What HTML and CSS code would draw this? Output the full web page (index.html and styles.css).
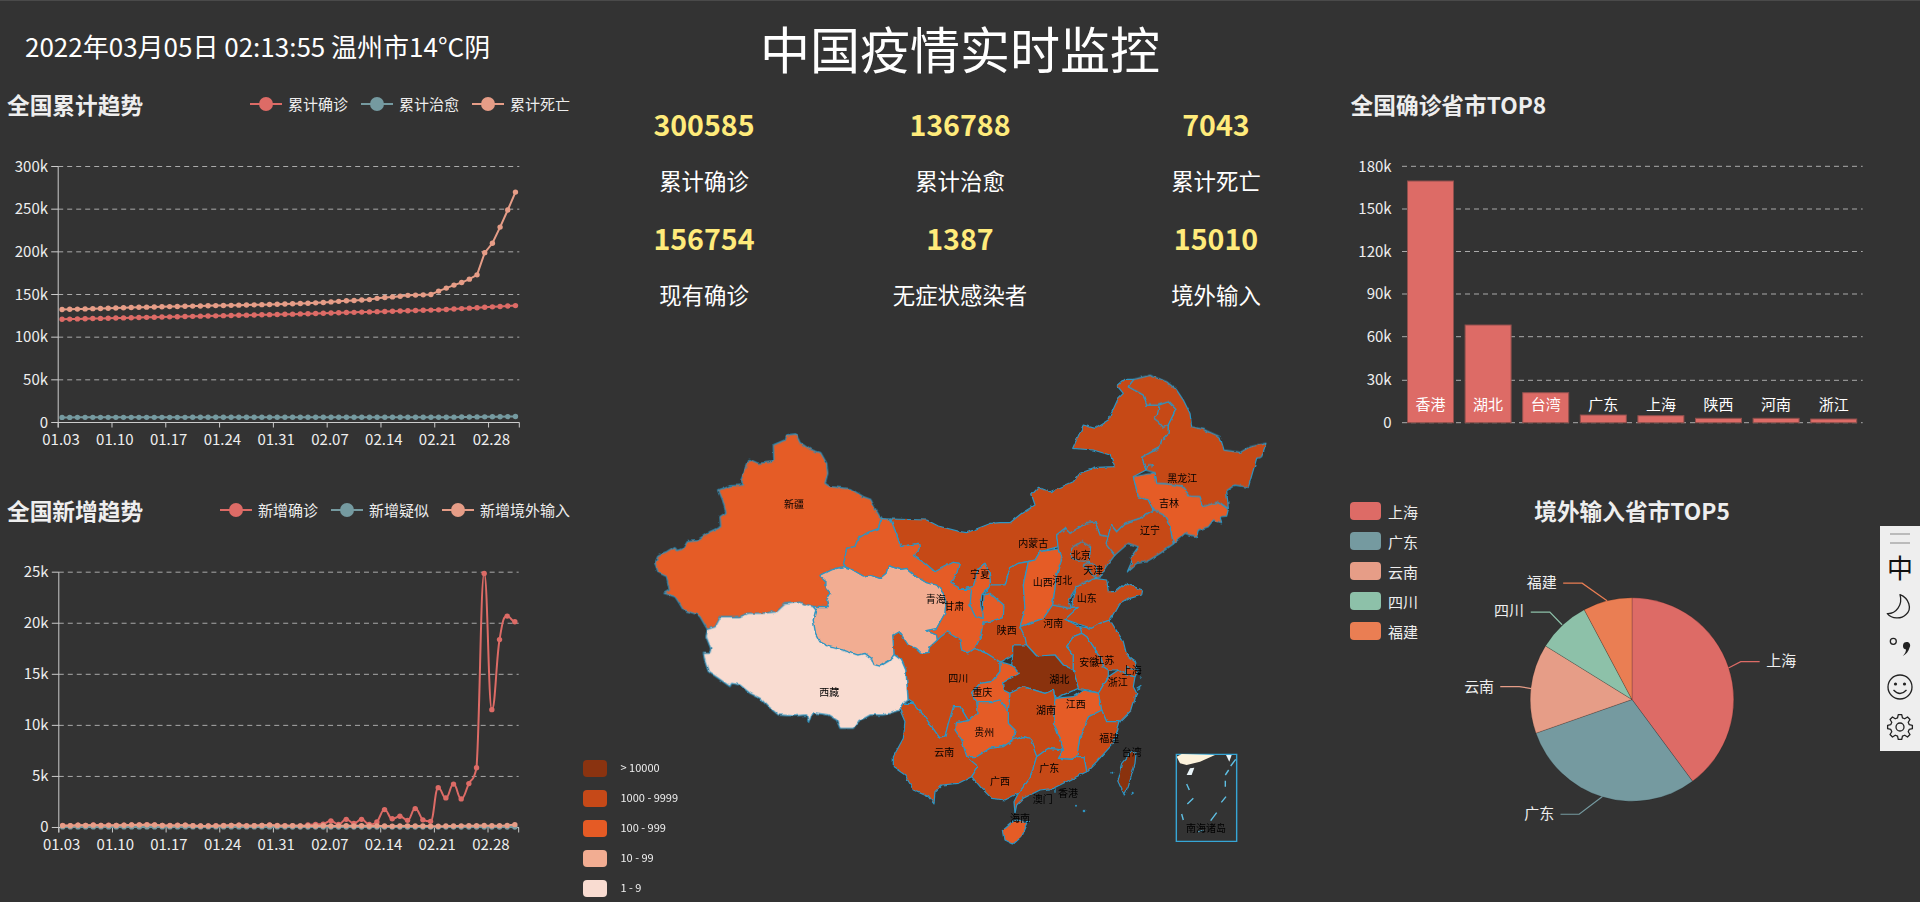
FILE: index.html
```html
<!DOCTYPE html>
<html lang="zh-CN">
<head>
<meta charset="utf-8">
<title>中国疫情实时监控</title>
<link rel="stylesheet" href="styles.css">
</head>
<body>
<main class="page">
  <section class="col">
    <div class="clock">2022年03月05日 02:13:55 温州市14°C阴</div>
    <div class="panel-head">
      <h2 class="panel-title">全国累计趋势</h2>
      <ul class="legend">
        <li class="legend-item c1"><span class="mark"></span>累计确诊</li>
        <li class="legend-item c2"><span class="mark"></span>累计治愈</li>
        <li class="legend-item c3"><span class="mark"></span>累计死亡</li>
      </ul>
    </div>
    <svg id="chart-total" class="chart chart-top" viewBox="0 119 576 341"></svg>
    <div class="panel-head panel-lower">
      <h2 class="panel-title">全国新增趋势</h2>
      <ul class="legend">
        <li class="legend-item c1"><span class="mark"></span>新增确诊</li>
        <li class="legend-item c2"><span class="mark"></span>新增疑似</li>
        <li class="legend-item c3"><span class="mark"></span>新增境外输入</li>
      </ul>
    </div>
    <svg id="chart-new" class="chart chart-bottom" viewBox="0 525 576 377"></svg>
  </section>

  <section class="col">
    <h1 class="title">中国疫情实时监控</h1>
    <div class="stats">
      <div class="num">300585</div><div class="num">136788</div><div class="num">7043</div>
      <div class="cap">累计确诊</div><div class="cap">累计治愈</div><div class="cap">累计死亡</div>
      <div class="num">156754</div><div class="num">1387</div><div class="num">15010</div>
      <div class="cap">现有确诊</div><div class="cap">无症状感染者</div><div class="cap">境外输入</div>
    </div>
    <div class="map-wrap">
      <svg class="map" viewBox="576 324 768 578">
        <defs>
          <filter id="rough" filterUnits="userSpaceOnUse" x="576" y="324" width="768" height="578">
            <feTurbulence type="fractalNoise" baseFrequency="0.14" numOctaves="2" seed="4"/>
            <feDisplacementMap in="SourceGraphic" scale="3.2" xChannelSelector="R" yChannelSelector="G"/>
          </filter>
        </defs>
        <g filter="url(#rough)">
        <!-- 内蒙古 -->
        <polygon class="p3" points="890.7,519 926.7,520 938.3,526 960,531.7 966.5,532.7 991,523.3 1000,522.7 1010,522.7 1021.7,513.3 1035,505 1031.7,495 1038.3,487.3 1050,491.7 1061.7,486.7 1073.3,481.7 1080,473.3 1096.7,467.3 1115,466.7 1110,455 1093.3,450 1072.7,448.3 1083.3,425 1095,428.3 1108.3,420 1118.3,398.3 1123.3,393.3 1117.3,386 1125,379.3 1134,379.3 1128.3,386.7 1143.3,395 1146.7,405 1158.3,405 1168.3,401.7 1176,409.3 1168.3,425 1168.3,433.3 1161.7,440 1160,447.3 1141.7,457.3 1146,470 1133.3,476.7 1138.3,496.7 1148.3,500 1153.3,510 1140,518.3 1125,523.3 1116.7,531.7 1111,525 1108.3,536.7 1100,535 1095,521.7 1086.7,522.7 1070,533.3 1065,528.3 1056.7,535 1058.3,546.7 1040,551.7 1035,560 1026.7,561.7 1018.3,563.3 1010,568.3 1005,585 990.7,585 989.3,573.3 985,563.3 978.3,568.3 973.3,586.7 961.7,589.3 950.7,583.3 956.7,573.3 959.3,563.3 953.3,562.3 935,571.7 925,563.3 913.3,555.7 919.3,548.3 918.3,543.3 900.7,546.7 896.7,535"/>

        <g transform="translate(650 420) scale(.33333)">
          <polygon class="p2" points="410,45 438,42 450,68 480,88 512,98 530,130 533,160 525,190 540,200 600,206 640,230 662,238 675,265 693,296 686,326 655,337 625,355 615,380 590,385 580,440 545,450 510,467 525,480 525,500 542,520 530,540 535,560 490,560 450,547 405,552 380,575 340,580 295,580 270,590 240,590 212,590 196,620 172,628 150,590 140,583 100,570 88,550 75,530 42,520 58,510 50,470 25,458 15,430 25,405 50,395 75,380 80,392 100,385 112,365 140,362 180,335 212,320 210,290 228,278 218,240 206,210 240,198 280,195 273,180 298,118 325,130 372,125 370,75 405,60"/>
          <polygon class="p5" points="172,628 196,620 212,590 240,590 270,590 295,580 340,580 380,575 405,552 450,547 490,560 498,570 490,600 497,640 510,665 540,680 580,690 625,705 645,700 665,715 672,733 690,738 720,720 732,703 755,720 768,750 772,800 775,840 762,850 750,870 720,880 700,885 660,885 625,905 610,925 570,925 560,900 535,885 490,878 475,908 470,885 430,888 385,885 355,860 330,835 300,820 270,795 245,790 240,800 205,775 175,755 165,725 160,700 180,700 182,685 168,650"/>
        </g>

        <g transform="translate(860 530) scale(.33333)">
          <!-- 四川 -->
          <polygon class="p3" points="98,315 115,305 125,315 145,345 170,355 185,370 205,367 210,350 232,330 240,322 262,305 300,330 305,360 325,368 345,355 380,370 420,395 420,425 395,455 360,460 335,488 350,515 355,550 325,572 300,530 280,560 265,580 255,620 240,625 215,590 190,555 160,520 145,510 142,470 138,420 125,390 102,373"/>
          <!-- 青海 -->
          <g transform="translate(-630 -330)">
            <polygon class="p4" points="510,467 545,450 580,440 600,445 640,468 660,465 690,475 708,460 715,437 750,448 770,445 800,470 830,488 860,495 880,520 888,545 885,580 860,625 870,630 828,632 860,645 862,660 840,680 835,697 815,700 800,685 775,675 755,645 745,635 728,645 732,703 720,720 690,738 672,733 665,715 645,700 625,705 580,690 540,680 510,665 497,640 490,600 498,570 490,560 535,560 530,540 542,520 525,500 525,480"/>
          </g>
          <!-- 甘肃 -->
          <polygon class="p2" points="63,-34 92,-33 110,15 122,50 175,40 178,55 160,77 195,100 225,125 280,97 298,100 290,130 272,160 305,178 335,178 330,225 345,258 368,265 372,195 390,190 432,225 430,262 405,272 370,278 360,325 345,355 325,368 305,360 300,330 262,305 240,322 232,330 230,315 198,302 230,295 255,250 258,215 250,190 230,165 200,158 170,140 140,115 120,118 85,107 78,130 60,145 30,135 10,138 -30,115 -50,110 -40,55 -15,50 -5,25 25,7 56,-4"/>
          <!-- 宁夏 -->
          <polygon class="p2" points="305,178 340,170 355,115 375,100 388,130 392,165 365,195 362,225 370,265 345,258 330,225 335,178"/>
          <!-- 陕西 -->
          <polygon class="p3" points="392,165 435,165 450,115 475,100 505,95 490,165 495,240 480,290 495,320 500,345 458,345 458,375 420,395 380,370 345,355 360,325 370,278 405,272 430,262 432,225 390,190 372,195"/>
          <!-- 山西 -->
          <polygon class="p2" points="505,95 525,90 540,65 595,57 605,90 590,135 585,175 578,225 550,265 480,290 495,240 490,165"/>
          <!-- 河南 -->
          <polygon class="p3" points="480,290 550,265 578,225 635,235 655,232 615,268 660,290 665,310 640,320 620,350 640,375 640,420 610,405 585,375 530,378 500,345 495,320"/>
          <!-- 山东 -->
          <polygon class="p3" points="635,235 640,195 650,170 705,145 740,150 745,185 765,185 795,160 848,180 845,195 810,205 775,225 750,270 720,280 695,295 665,285 615,268 655,232"/>
          <!-- 江苏 -->
          <polygon class="p3" points="695,295 720,280 750,270 790,335 800,375 825,395 835,420 795,435 775,420 745,420 730,410 720,380 700,350 680,320 665,310 660,290"/>
          <!-- 安徽 -->
          <polygon class="p3" points="665,310 680,320 700,350 720,380 730,410 745,420 745,440 715,490 685,480 655,475 640,420 640,375 620,350 640,320"/>
          <!-- 上海 -->
          <polygon class="p3" points="800,410 835,420 825,440 795,435"/>
          <!-- 浙江 -->
          <polygon class="p3" points="745,440 775,420 795,435 825,440 820,470 830,490 815,540 780,575 740,575 725,540 715,490"/>
          <!-- 福建 -->
          <polygon class="p3" points="725,540 740,575 780,575 760,640 710,695 680,725 672,680 650,680 660,620 685,560"/>
          <!-- 江西 -->
          <polygon class="p2" points="585,505 640,500 670,480 715,490 725,540 685,560 660,620 650,680 635,688 595,685 610,660 590,600 580,580"/>
          <!-- 重庆 -->
          <polygon class="p2" points="420,395 455,405 478,430 428,458 430,480 450,490 445,545 420,510 400,515 350,515 335,488 360,460 395,455 420,425"/>
          <!-- 湖北 -->
          <polygon class="p1" points="458,345 500,345 530,378 585,375 610,405 640,420 655,475 585,505 580,480 555,490 490,470 450,490 430,480 428,458 478,430 455,405 458,375"/>
          <!-- 湖南 -->
          <polygon class="p3" points="450,490 490,470 555,490 580,480 585,505 580,580 590,600 610,660 565,655 530,680 510,625 490,620 460,630 465,600 445,580 445,545"/>
          <!-- 贵州 -->
          <polygon class="p2" points="400,515 420,510 445,545 445,580 465,600 460,630 430,650 390,655 350,680 320,680 305,630 285,600 285,578 325,572 355,550 350,515"/>
          <!-- 云南 -->
          <polygon class="p3" points="120,540 132,520 160,520 190,555 215,590 240,625 255,620 265,580 280,530 300,530 325,572 285,578 285,600 305,630 320,680 355,710 335,740 295,760 245,765 225,785 222,822 205,800 160,780 135,735 100,710 100,680 130,625 135,575"/>
          <!-- 广西 -->
          <polygon class="p3" points="320,680 350,680 390,655 430,650 460,630 490,620 510,625 530,680 510,745 475,790 435,810 395,805 365,775 335,740 355,710"/>
          <!-- 广东 -->
          <polygon class="p3" points="530,680 565,655 610,660 595,685 635,688 650,680 672,680 680,725 640,745 580,775 540,780 490,805 470,825 465,850 462,815 475,790 510,745"/>
        </g>

        <g transform="translate(1000 370) scale(.33333)">
          <!-- 黑龙江 -->
          <polygon class="p3" points="402,28 450,16 500,35 530,60 550,90 570,130 575,170 610,178 660,200 672,240 720,247 750,230 798,220 785,260 770,265 745,352 705,345 680,362 685,415 655,395 610,410 600,380 570,378 545,348 505,342 470,340 465,308 438,300 425,262 480,232 485,210 505,190 505,165 528,118 505,95 475,105 440,105 430,75 385,50"/>
          <path class="map-line" d="M478 105 472 135 462 145 475 155 490 172 505 165M438 300 445 285 458 283 455 292"/>
          <!-- 吉林 -->
          <polygon class="p2" points="400,320 465,308 470,340 505,342 545,348 570,378 600,380 610,410 655,395 685,418 680,438 660,440 665,458 640,450 625,470 595,480 590,500 555,490 520,522 510,470 490,435 460,420 445,390 415,380"/>
          <!-- 辽宁 -->
          <polygon class="p3" points="460,420 490,435 510,470 520,522 480,550 440,575 410,580 382,605 395,575 390,565 415,530 385,520 345,555 315,520 325,500 333,465 350,485 375,460 420,445"/>
          <!-- 河北 -->
          <polygon class="p3" points="170,495 195,475 210,490 260,458 285,455 300,495 325,500 318,520 345,555 318,590 300,622 285,625 230,650 205,690 215,715 158,705 165,655 170,615 185,570 175,537"/>
          <!-- 北京 -->
          <polygon class="p3" points="245,515 272,530 268,575 240,572 215,565 215,535"/>
          <!-- 天津 -->
          <polygon class="p3" points="268,575 290,590 290,625 275,610 250,585"/>
        </g>

        <g transform="translate(1000 600) scale(.33333)">
          <!-- 海南 -->
          <polygon class="p2" points="45,660 85,665 65,710 40,732 15,720 10,690"/>
          <!-- 台湾 -->
          <polygon class="p1" points="395,455 408,460 405,490 385,560 373,585 352,540 365,490"/>
          <circle class="islet" cx="228" cy="617" r="3"/>
          <circle class="islet" cx="255" cy="633" r="4"/>
          <circle class="islet" cx="395" cy="578" r="3"/>
          <circle class="islet" cx="337" cy="518" r="3"/>
          <path class="map-line" d="M165 565 165 578M420 235 424 232M410 265 424 256M412 272 420 262"/>
        </g>
        </g>

        <!-- 南海诸岛 -->
        <g transform="translate(1000 600) scale(.33333)">
          <rect class="sea-box" x="529" y="463" width="181" height="261"/>
          <polygon class="sea-land" points="530,470 545,462 645,465 600,485 560,495 540,490"/>
          <polygon class="sea-isle" points="560,525 570,505 583,503 575,525"/>
          <polygon class="sea-isle" points="678,465 695,465 688,485"/>
          <path class="sea-dash" d="M692 498 707 478M676 525 686 510M676 542 676 560M664 607 678 590M562 612 580 595M560 552 568 570M545 642 550 660M632 662 650 638M595 695 610 692"/>
        </g>

        <g class="map-labels">
          <text x="794" y="504.3">新疆</text><text x="829.3" y="692">西藏</text>
          <text x="935.7" y="599.3">青海</text><text x="954.3" y="606.7">甘肃</text>
          <text x="958.3" y="678.3">四川</text><text x="1033.3" y="543.3">内蒙古</text>
          <text x="1080.7" y="555.7">北京</text><text x="1093.3" y="570">天津</text>
          <text x="1042.7" y="582.3">山西</text><text x="1062.3" y="580">河北</text>
          <text x="1086.7" y="598.3">山东</text><text x="1053.3" y="623.3">河南</text>
          <text x="1006.7" y="630">陕西</text><text x="980" y="574.3">宁夏</text>
          <text x="1104.3" y="660">江苏</text><text x="1089.3" y="662.3">安徽</text>
          <text x="1131.7" y="670.7">上海</text><text x="1059.3" y="679">湖北</text>
          <text x="1117.7" y="682.7">浙江</text><text x="982.3" y="692.7">重庆</text>
          <text x="1075.7" y="704.7">江西</text><text x="1046" y="710">湖南</text>
          <text x="984.3" y="732.3">贵州</text><text x="1109.3" y="738.3">福建</text>
          <text x="1131.7" y="752.7">台湾</text><text x="944.3" y="752.3">云南</text>
          <text x="1049.3" y="768">广东</text><text x="1000" y="781.7">广西</text>
          <text x="1068" y="793.3">香港</text><text x="1042.7" y="799.3">澳门</text>
          <text x="1020" y="818.3">海南</text><text x="1182.3" y="478.3">黑龙江</text>
          <text x="1169" y="503.3">吉林</text><text x="1150" y="530">辽宁</text>
          <text x="1206" y="828.7">南海诸岛</text>
        </g>
      </svg>
      <ul class="map-legend">
        <li class="map-key"><span class="key-swatch k1"></span>&gt; 10000</li>
        <li class="map-key"><span class="key-swatch k2"></span>1000 - 9999</li>
        <li class="map-key"><span class="key-swatch k3"></span>100 - 999</li>
        <li class="map-key"><span class="key-swatch k4"></span>10 - 99</li>
        <li class="map-key"><span class="key-swatch k5"></span>1 - 9</li>
      </ul>
    </div>
  </section>

  <section class="col">
    <div class="clock-spacer"></div>
    <div class="panel-head panel-head-right">
      <h2 class="panel-title">全国确诊省市TOP8</h2>
    </div>
    <svg class="chart chart-top" viewBox="1344 119 576 341">
      <g class="grid">
        <line x1="1402" x2="1862.7" y1="166.3" y2="166.3"/><line x1="1402" x2="1862.7" y1="209" y2="209"/>
        <line x1="1402" x2="1862.7" y1="251.5" y2="251.5"/><line x1="1402" x2="1862.7" y1="294" y2="294"/>
        <line x1="1402" x2="1862.7" y1="336.7" y2="336.7"/><line x1="1402" x2="1862.7" y1="380.3" y2="380.3"/>
        <line x1="1402" x2="1862.7" y1="422.7" y2="422.7"/>
      </g>
      <g class="ticks-y">
        <text x="1391.6" y="165">180k</text><text x="1391.6" y="207.7">150k</text>
        <text x="1391.6" y="250">120k</text><text x="1391.6" y="292.7">90k</text>
        <text x="1391.6" y="335.4">60k</text><text x="1391.6" y="378">30k</text>
        <text x="1391.6" y="421">0</text>
      </g>
      <g class="bars">
        <rect x="1407.5" y="181" width="46" height="241.7"/>
        <rect x="1465.1" y="325" width="46" height="97.7"/>
        <rect x="1522.7" y="392.7" width="46" height="30"/>
        <rect x="1580.3" y="415" width="46" height="7.7"/>
        <rect x="1637.9" y="415.7" width="46" height="7"/>
        <rect x="1695.5" y="418.3" width="46" height="4.4"/>
        <rect x="1753.1" y="418.3" width="46" height="4.4"/>
        <rect x="1810.7" y="419" width="46" height="3.7"/>
      </g>
      <g class="bar-labels">
        <text x="1430.5" y="403">香港</text><text x="1488.1" y="403">湖北</text>
        <text x="1545.7" y="403">台湾</text><text x="1603.3" y="403">广东</text>
        <text x="1660.9" y="403">上海</text><text x="1718.5" y="403">陕西</text>
        <text x="1776.1" y="403">河南</text><text x="1833.7" y="403">浙江</text>
      </g>
    </svg>
    <div class="panel-head panel-lower panel-head-center">
      <h2 class="panel-title">境外输入省市TOP5</h2>
      <ul class="pie-legend">
        <li class="pie-key"><span class="pie-swatch s1"></span>上海</li>
        <li class="pie-key"><span class="pie-swatch s2"></span>广东</li>
        <li class="pie-key"><span class="pie-swatch s3"></span>云南</li>
        <li class="pie-key"><span class="pie-swatch s4"></span>四川</li>
        <li class="pie-key"><span class="pie-swatch s5"></span>福建</li>
      </ul>
    </div>
    <svg class="chart chart-bottom" viewBox="1344 525 576 377">
      <g class="slices">
        <path class="f1" d="M1632 700V598A102 102 0 0 1 1692.7 782Z"/>
        <path class="f2" d="M1632 700L1692.7 782A102 102 0 0 1 1535.7 733.7Z"/>
        <path class="f3" d="M1632 700L1535.7 733.7A102 102 0 0 1 1545.3 646.2Z"/>
        <path class="f4" d="M1632 700L1545.3 646.2A102 102 0 0 1 1584.1 609.9Z"/>
        <path class="f5" d="M1632 700L1584.1 609.9A102 102 0 0 1 1632 598Z"/>
      </g>
      <g class="leaders">
        <polyline class="l1" points="1728.7,668.3 1741,662 1760,662"/>
        <polyline class="l2" points="1602.4,797.3 1579,815 1560.3,815"/>
        <polyline class="l3" points="1531.2,689 1519,687 1499.9,687"/>
        <polyline class="l4" points="1561.9,625 1549.6,612.3 1530.5,612.3"/>
        <polyline class="l5" points="1607,601 1582,583.3 1563,583.3"/>
      </g>
      <g class="pie-labels">
        <text class="start" x="1766.6" y="660">上海</text>
        <text x="1554" y="813.7">广东</text>
        <text x="1493.7" y="685.7">云南</text>
        <text x="1523.6" y="610">四川</text>
        <text x="1556.5" y="581.3">福建</text>
      </g>
    </svg>
  </section>
</main>

<aside class="ime">
  <div class="ime-handle"></div>
  <div class="ime-cell ime-zh">中</div>
  <svg class="ime-cell" viewBox="0 0 40 40"><path class="ime-stroke" d="M20 7.6C29 11 32.5 22 26 27.5 21 32.5 12 32 7.3 26.6 16 27 23 18 20 7.6Z"/></svg>
  <svg class="ime-cell" viewBox="0 0 40 40"><circle class="ime-stroke" cx="13.3" cy="14.3" r="3"/><path class="ime-fill" d="M23 18.5a3.6 3.6 0 1 1 6.6 2C28.6 24.5 26 27.5 22.8 29 25 26.5 26 24.5 26 22.4A3.6 3.6 0 0 1 23 18.5Z"/></svg>
  <svg class="ime-cell" viewBox="0 0 40 40"><circle class="ime-stroke" cx="20" cy="20" r="12"/><circle class="ime-fill" cx="15.5" cy="17" r="1.6"/><circle class="ime-fill" cx="24.5" cy="17" r="1.6"/><path class="ime-stroke" d="M13.5 23Q20 30 26.5 23"/></svg>
  <svg class="ime-cell" viewBox="0 0 40 40"><g transform="translate(20 20)"><polygon class="ime-stroke" points="-2.46,-9.18 -1.74,-12.38 1.74,-12.38 2.46,-9.18 4.75,-8.23 7.52,-9.98 9.98,-7.52 8.23,-4.75 9.18,-2.46 12.38,-1.74 12.38,1.74 9.18,2.46 8.23,4.75 9.98,7.52 7.52,9.98 4.75,8.23 2.46,9.18 1.74,12.38 -1.74,12.38 -2.46,9.18 -4.75,8.23 -7.52,9.98 -9.98,7.52 -8.23,4.75 -9.18,2.46 -12.38,1.74 -12.38,-1.74 -9.18,-2.46 -8.23,-4.75 -9.98,-7.52 -7.52,-9.98 -4.75,-8.23"/><circle class="ime-stroke" r="4"/></g></svg>
</aside>
<script src="charts.js"></script>
</body>
</html>
```
FILE: styles.css
```css
* { box-sizing: border-box; }
html, body { margin: 0; padding: 0; }
body {
  height: 902px;
  overflow: hidden;
  background: #333;
  border-top: 1px solid #4a4a4a;
  color: #eee;
  font-family: "Noto Sans CJK SC", "Noto Sans", sans-serif;
}
h1, h2, ul { margin: 0; padding: 0; font-weight: normal; list-style: none; }

.page { display: grid; grid-template-columns: 576px 768px 576px; height: 901px; }
.col { display: flex; flex-direction: column; position: relative; min-width: 0; }

.clock { height: 92px; padding: 0 0 4px 25px; display: flex; align-items: center; font-size: 26px; color: #fff; white-space: nowrap; }
.clock-spacer { height: 92px; }

.panel-head { position: relative; height: 26px; display: flex; justify-content: space-between; align-items: flex-start; padding: 0 6px 0 7px; }
.panel-lower { margin-top: 39px; }
.panel-head-right { padding-left: 6.6px; }
.panel-head-center { justify-content: center; padding: 0; }
.panel-title { font-size: 22.7px; line-height: 24px; font-weight: bold; color: #eee; white-space: nowrap; }

.legend { display: flex; gap: 13px; }
.legend-item { display: flex; align-items: center; gap: 6px; font-size: 15px; line-height: 22px; color: #eee; white-space: nowrap; }
.mark { width: 32px; height: 2px; background: currentColor; display: flex; justify-content: center; align-items: center; }
.mark::after { content: ""; flex: none; width: 14px; height: 14px; border-radius: 50%; background: currentColor; }
.c1 .mark { color: #dd6b66; }
.c2 .mark { color: #759aa0; }
.c3 .mark { color: #e69d87; }

.chart { display: block; width: 576px; }
.chart-top { height: 341px; }
.chart-bottom { height: 376px; }

.grid line { stroke: #aaa; stroke-width: 1; stroke-dasharray: 5 4; }
.axis line { stroke: #ccc; stroke-width: 1; }
.ticks-y text, .ticks-x text, .bar-labels text, .pie-labels text { font-size: 15px; fill: #eee; dominant-baseline: central; }
.ticks-y text { text-anchor: end; }
.ticks-x text { text-anchor: middle; }
.bar-labels text { text-anchor: middle; fill: #fff; }
.line { fill: none; stroke-width: 2; }
.s-1 .line { stroke: #dd6b66; } .s-1 circle { fill: #dd6b66; }
.s-2 .line { stroke: #759aa0; } .s-2 circle { fill: #759aa0; }
.s-3 .line { stroke: #e69d87; } .s-3 circle { fill: #e69d87; }

.bars rect { fill: #dd6b66; stroke: #8f4f4c; stroke-width: 1; }

.slices path { stroke: rgba(0, 0, 0, .3); stroke-width: .6; }
.f1 { fill: #dd6b66; } .f2 { fill: #759aa0; } .f3 { fill: #e69d87; } .f4 { fill: #8dc1a9; } .f5 { fill: #ea7e53; }
.leaders polyline { fill: none; stroke-width: 1.2; }
.l1 { stroke: #dd6b66; } .l2 { stroke: #759aa0; } .l3 { stroke: #e69d87; } .l4 { stroke: #8dc1a9; } .l5 { stroke: #ea7e53; }
.pie-labels text { text-anchor: end; }
.pie-labels text.start { text-anchor: start; }

.pie-legend { position: absolute; left: 6px; top: 3px; display: flex; flex-direction: column; gap: 12px; }
.pie-key { display: flex; align-items: center; gap: 7px; height: 18px; font-size: 15px; color: #eee; white-space: nowrap; }
.pie-swatch { width: 31px; height: 18px; border-radius: 4px; }
.s1 { background: #dd6b66; } .s2 { background: #759aa0; } .s3 { background: #e69d87; } .s4 { background: #8dc1a9; } .s5 { background: #ea7e53; }

.title { height: 96px; padding-bottom: 5px; display: flex; align-items: center; justify-content: center; font-size: 50px; line-height: 50px; color: #fff; white-space: nowrap; }
.stats { display: grid; grid-template-columns: repeat(3, 256px); grid-auto-rows: 56.67px; }
.num, .cap { display: flex; align-items: center; justify-content: center; padding-bottom: 3px; white-space: nowrap; }
.num { font-size: 28.6px; font-weight: bold; color: #ffeb7b; }
.cap { font-size: 22.4px; color: #fff; }

.map-wrap { position: relative; flex: 1; min-height: 0; }
.map { display: block; width: 768px; height: 578px; }
.map polygon { stroke: #2e96c4; stroke-width: 1.2; stroke-linejoin: round; vector-effect: non-scaling-stroke; }
.p1 { fill: #8a3310; } .p2 { fill: #e55b25; } .p3 { fill: #c64918; } .p4 { fill: #f2ad92; } .p5 { fill: #f9dcd1; }
.map-line { fill: none; stroke: #2e96c4; stroke-width: 1.2; vector-effect: non-scaling-stroke; }
.islet { fill: #2e96c4; }
.sea-box { fill: none; stroke: #36a6d6; stroke-width: 1.4; vector-effect: non-scaling-stroke; }
.map .sea-land { fill: #fdf3dc; stroke: none; }
.map .sea-isle { fill: #eaf4f8; stroke: none; }
.sea-dash { fill: none; stroke: #5fc0e4; stroke-width: 1.4; vector-effect: non-scaling-stroke; }
.map-labels { transform: translateY(-1px); }
.map-labels text { font-size: 10px; fill: #000; text-anchor: middle; dominant-baseline: central; }

.map-legend { position: absolute; left: 6.5px; top: 436px; display: flex; flex-direction: column; gap: 12.5px; }
.map-key { display: flex; align-items: flex-start; gap: 13.5px; height: 17.5px; font-size: 11px; line-height: 14.5px; color: #eee; white-space: nowrap; }
.key-swatch { width: 24.5px; height: 17.5px; border-radius: 4px; }
.k1 { background: #8a3310; } .k2 { background: #c64918; } .k3 { background: #e55b25; } .k4 { background: #f2ad92; } .k5 { background: #f9dcd1; }

.ime { position: fixed; right: 0; top: 526px; width: 40px; height: 225px; background: #eee; display: flex; flex-direction: column; }
.ime-handle { height: 21px; padding-top: 7px; }
.ime-handle::before { content: ""; display: block; margin: 0 auto; width: 20px; height: 7px; border-top: 2px solid #bbb; border-bottom: 2px solid #bbb; }
.ime-cell { display: block; width: 40px; height: 40px; flex: none; }
.ime-zh { display: flex; align-items: center; justify-content: center; font-size: 26px; line-height: 40px; color: #111; }
.ime-stroke { fill: none; stroke: #222; stroke-width: 1.3; stroke-linejoin: round; }
.ime-fill { fill: #222; }
```
FILE: charts.js
```js
(function () {
  var NS = 'http://www.w3.org/2000/svg';
  var X0 = 58.2, BAND = 7.685, N = 60, X1 = X0 + BAND * N;

  function el(parent, name, attrs, text) {
    var node = document.createElementNS(NS, name);
    for (var k in attrs) node.setAttribute(k, attrs[k]);
    if (text !== undefined) node.textContent = text;
    parent.appendChild(node);
    return node;
  }

  function ramp(stops) {
    var out = [];
    for (var s = 0; s < stops.length - 1; s++) {
      var a = stops[s], b = stops[s + 1];
      for (var i = a[0]; i < b[0]; i++) out.push(a[1] + (b[1] - a[1]) * (i - a[0]) / (b[0] - a[0]));
    }
    out.push(stops[stops.length - 1][1]);
    return out;
  }

  function straight(pts) {
    return 'M' + pts.map(function (p) { return p[0].toFixed(2) + ' ' + p[1].toFixed(2); }).join('L');
  }

  function smooth(pts) {
    var slope = pts.map(function (p, i) {
      if (i === 0 || i === pts.length - 1) return 0;
      var a = pts[i - 1][1], b = pts[i + 1][1], y = p[1];
      if ((y - a) * (b - y) <= 0) return 0;
      return (b - a) / (2 * BAND);
    });
    var d = 'M' + pts[0][0].toFixed(2) + ' ' + pts[0][1].toFixed(2);
    for (var i = 0; i < pts.length - 1; i++) {
      var p = pts[i], q = pts[i + 1], h = BAND * 0.45;
      var lo = Math.min(p[1], q[1]), hi = Math.max(p[1], q[1]);
      var y1 = Math.max(lo, Math.min(hi, p[1] + slope[i] * h));
      var y2 = Math.max(lo, Math.min(hi, q[1] - slope[i + 1] * h));
      d += 'C' + (p[0] + h).toFixed(2) + ' ' + y1.toFixed(2) + ' ' + (q[0] - h).toFixed(2) + ' ' + y2.toFixed(2) + ' ' + q[0].toFixed(2) + ' ' + q[1].toFixed(2);
    }
    return d;
  }

  function build(cfg) {
    var svg = document.getElementById(cfg.id);
    var top = cfg.top, bottom = cfg.bottom, step = (bottom - top) / (cfg.yLabels.length - 1);
    var grid = el(svg, 'g', { 'class': 'grid' });
    var axis = el(svg, 'g', { 'class': 'axis' });
    var ty = el(svg, 'g', { 'class': 'ticks-y' });
    var tx = el(svg, 'g', { 'class': 'ticks-x' });

    cfg.yLabels.forEach(function (label, i) {
      var y = bottom - step * i;
      el(grid, 'line', { x1: X0, x2: X1, y1: y, y2: y });
      el(axis, 'line', { x1: X0 - 7, x2: X0, y1: y, y2: y });
      el(ty, 'text', { x: 48, y: y - 1.5 }, label);
    });
    el(axis, 'line', { x1: X0, x2: X0, y1: top, y2: bottom + 5 });
    el(axis, 'line', { x1: X0, x2: X1, y1: bottom, y2: bottom });
    for (var i = 0; i <= N; i += 7) {
      var x = X0 + BAND * i;
      el(axis, 'line', { x1: x, x2: x, y1: bottom, y2: bottom + 5 });
      el(tx, 'text', { x: x + BAND / 2 - 1, y: bottom + 15.7 }, cfg.dates[i / 7]);
    }
    el(axis, 'line', { x1: X1, x2: X1, y1: bottom, y2: bottom + 5 });

    cfg.series.forEach(function (values, s) {
      var group = el(svg, 'g', { 'class': 's-' + (s + 1) });
      var pts = values.map(function (v, i) {
        return [X0 + BAND * (i + 0.5), bottom - v * (bottom - top) / cfg.max];
      });
      el(group, 'path', { 'class': 'line', d: cfg.smooth ? smooth(pts) : straight(pts) });
      pts.forEach(function (p) { el(group, 'circle', { cx: p[0], cy: p[1], r: 2.7 }); });
    });
  }

  var DATES = ['01.03', '01.10', '01.17', '01.24', '01.31', '02.07', '02.14', '02.21', '02.28'];

  build({
    id: 'chart-total', top: 166.5, bottom: 422.5, max: 300,
    yLabels: ['0', '50k', '100k', '150k', '200k', '250k', '300k'], dates: DATES,
    series: [
      ramp([[0, 121], [30, 127], [49, 132], [59, 137]]),
      ramp([[0, 6], [50, 6.2], [59, 7]]),
      [132.5, 132.7, 132.9, 133.1, 133.4, 133.6, 133.9, 134.2, 134.4, 134.7,
       135, 135.2, 135.4, 135.6, 135.8, 136, 136.2, 136.4, 136.6, 136.8,
       137, 137.1, 137.3, 137.5, 137.7, 137.9, 138.1, 138.3, 138.6, 138.8,
       139.1, 139.4, 139.8, 140.2, 140.7, 141.3, 142, 142.6, 143, 143.5,
       144, 145.5, 146.5, 147.2, 148, 149, 149.3, 149.6,
       150, 154, 157.5, 161, 164, 168, 173, 199, 210, 229, 249, 270]
    ]
  });

  build({
    id: 'chart-new', top: 572.3, bottom: 828.3, max: 25000, smooth: true,
    yLabels: ['0', '5k', '10k', '15k', '20k', '25k'], dates: DATES,
    series: [
      [200, 180, 230, 210, 240, 200, 220, 210, 230, 250, 260, 270, 260, 200, 190, 220,
       230, 180, 160, 150, 170, 190, 210, 220, 170, 180, 210, 240, 190, 170, 180, 150,
       250, 300, 330, 650, 300, 800, 400, 800, 300, 550, 1750, 850, 1100, 700, 1850, 750,
       600, 3900, 2900, 4250, 2800, 4300, 5850, 24870, 11540, 18400, 20700, 20150],
      ramp([[0, 60], [59, 50]]),
      [180, 170, 220, 200, 230, 190, 210, 200, 220, 240,
       250, 260, 250, 190, 180, 210, 230, 170, 150, 140,
       160, 180, 200, 220, 160, 170, 200, 230, 180, 160,
       170, 150, 160, 140, 170, 150, 160, 180, 150, 170,
       150, 160, 140, 130, 150, 160, 140, 150, 130, 120,
       140, 150, 160, 170, 180, 190, 170, 180, 200, 280]
    ]
  });
})();
```
